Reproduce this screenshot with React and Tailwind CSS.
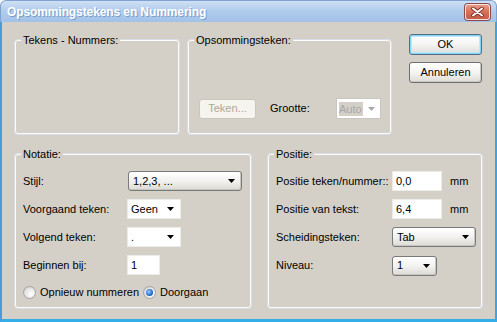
import React from "react";

function Arrow({ disabled }) {
  return (
    <svg width="7" height="4" viewBox="0 0 7 4" className="shrink-0">
      <path d="M0 0h7L3.5 4z" fill={disabled ? "#a9a9a9" : "#000"} />
    </svg>
  );
}

function DropList({ w, text }) {
  return (
    <div
      className={`${w} h-[20px] flex items-center justify-between pl-[4px] pr-[6px] rounded-[3px] border border-[#7a7a7a] bg-gradient-to-b from-[#ffffff] via-[#f2f2f0] to-[#dcdad4] shadow-[inset_-1px_-1px_0_#c8c6c0]`}
    >
      <span className="leading-none">{text}</span>
      <Arrow />
    </div>
  );
}

function EditCombo({ w, text }) {
  return (
    <div className={`${w} h-[20px] flex items-center justify-between pl-[3px] pr-[6px] bg-white border border-[#ecebe6]`}>
      <span className="leading-none">{text}</span>
      <Arrow />
    </div>
  );
}

function Input({ w, text }) {
  return (
    <div className={`${w} h-[20px] flex items-center pl-[3px] bg-white border border-[#ecebe6]`}>
      <span className="leading-none">{text}</span>
    </div>
  );
}

function Radio({ checked, label }) {
  return (
    <div className="flex items-center">
      <span className="w-[13px] h-[13px] rounded-full border border-[#a4a4a4] bg-[radial-gradient(circle_at_65%_65%,#ffffff_0%,#e6e6e6_55%,#c8c8c8_100%)] flex items-center justify-center shrink-0">
        {checked && (
          <span className="w-[7px] h-[7px] rounded-full bg-[radial-gradient(circle_at_40%_40%,#9fd0ff_0%,#2b6fd0_55%,#123f88_100%)]" />
        )}
      </span>
      <span className="ml-[4px]">{label}</span>
    </div>
  );
}

function Group({ title, className, children }) {
  return (
    <div className={`relative rounded-[3px] border border-[#fbfcfe] shadow-[0_0_0_1px_#d9dde5] ${className}`}>
      <span className="absolute -top-[7px] left-[5px] px-[2px] bg-[#d4d0c8] leading-[13px]">{title}</span>
      {children}
    </div>
  );
}

function Button({ children, focused }) {
  return (
    <div
      className={`w-[73px] h-[21px] rounded-[3px] border ${
        focused ? "border-[#5b6d80]" : "border-[#6f6f6f]"
      } bg-gradient-to-b from-[#ffffff] via-[#f4f4f2] to-[#dedcd6] flex items-center justify-center ${
        focused ? "shadow-[inset_0_0_0_1px_#7fd4f8,inset_0_0_0_2px_#bfe9fb]" : "shadow-[inset_-1px_-1px_0_#c9c7c1]"
      }`}
    >
      {children}
    </div>
  );
}

function CloseBtn() {
  return (
    <div className="w-[25px] h-[16px] rounded-[3px] border border-[#f4e4e0] bg-gradient-to-b from-[#e79a85] via-[#d5705a] to-[#c85a44] shadow-[0_0_0_1px_#8a4a4a] flex items-center justify-center">
      <svg width="13" height="10" viewBox="0 0 13 10">
        <path d="M2 1.5L11 8.5M11 1.5L2 8.5" stroke="#7a2a20" strokeWidth="3.6" strokeLinecap="round" />
        <path d="M2 1.5L11 8.5M11 1.5L2 8.5" stroke="#ffffff" strokeWidth="2" strokeLinecap="round" />
      </svg>
    </div>
  );
}

export default function App() {
  return (
    <div className="w-[497px] h-[322px] flex flex-col font-['Liberation_Sans',Arial,sans-serif] text-[11px] text-black select-none">
      <div className="h-[22px] shrink-0 flex items-center justify-between pl-[6px] pr-[6px] rounded-t-[6px] border border-b-0 border-[#7fa3d0] bg-gradient-to-b from-[#cfe0f4] via-[#afcbec] to-[#a3c2e8]">
        <span className="text-white font-bold text-[12px] tracking-[-0.1px] [text-shadow:1px_1px_0_#7a9cc8]">
          Opsommingstekens en Nummering
        </span>
        <CloseBtn />
      </div>
      <div className="flex-1 bg-[#d4d0c8] border-l-2 border-r-2 border-b-[3px] border-l-[#4a9ade] border-r-[#3aa5e6] border-b-[#33aee8] pl-[13px] pt-[12px] flex flex-col">
        <div className="flex items-start">
          <Group title="Tekens - Nummers:" className="mt-[6px] w-[164px] h-[94px]" />
          <Group title="Opsommingsteken:" className="mt-[6px] ml-[9px] w-[203px] h-[94px]">
            <div className="pt-[57px] pl-[10px] flex items-center">
              <div className="w-[57px] h-[20px] rounded-[3px] border border-[#c9c7bb] bg-[#f5f4ef] text-[#aca899] flex items-center justify-center">
                Teken...
              </div>
              <span className="ml-[14px] w-[66px]">Grootte:</span>
              <div className="w-[45px] h-[21px] flex items-center justify-between pl-[2px] pr-[5px] bg-white border border-[#c9c7c2]">
                <span className="bg-[#d4d0c8] text-[#a7a7a7] leading-[14px] pr-[1px]">Auto</span>
                <Arrow disabled />
              </div>
            </div>
          </Group>
          <div className="ml-[18px] flex flex-col gap-[7px]">
            <Button focused>OK</Button>
            <Button>Annuleren</Button>
          </div>
        </div>

        <div className="flex items-start mt-[20px]">
          <Group title="Notatie:" className="w-[236px] h-[154px]">
            <div className="pt-[16px] pl-[7px] flex flex-col gap-[8px]">
              <div className="flex items-center h-[20px]">
                <span className="w-[105px]">Stijl:</span>
                <DropList w="w-[114px]" text="1,2,3, ..." />
              </div>
              <div className="flex items-center h-[20px]">
                <span className="w-[104px]">Voorgaand teken:</span>
                <EditCombo w="w-[54px]" text="Geen" />
              </div>
              <div className="flex items-center h-[20px]">
                <span className="w-[104px]">Volgend teken:</span>
                <EditCombo w="w-[54px]" text="." />
              </div>
              <div className="flex items-center h-[20px]">
                <span className="w-[104px]">Beginnen bij:</span>
                <Input w="w-[33px]" text="1" />
              </div>
              <div className="flex items-center mt-[3px] h-[13px]">
                <div className="w-[120px]">
                  <Radio label="Opnieuw nummeren" />
                </div>
                <Radio checked label="Doorgaan" />
              </div>
            </div>
          </Group>
          <Group title="Positie:" className="ml-[17px] w-[214px] h-[154px]">
            <div className="pt-[16px] pl-[7px] flex flex-col gap-[8px]">
              <div className="flex items-center h-[20px]">
                <span className="w-[116px]">Positie teken/nummer::</span>
                <Input w="w-[50px]" text="0,0" />
                <span className="ml-[8px]">mm</span>
              </div>
              <div className="flex items-center h-[20px]">
                <span className="w-[116px]">Positie van tekst:</span>
                <Input w="w-[50px]" text="6,4" />
                <span className="ml-[8px]">mm</span>
              </div>
              <div className="flex items-center h-[20px]">
                <span className="w-[116px]">Scheidingsteken:</span>
                <DropList w="w-[84px]" text="Tab" />
              </div>
              <div className="flex items-center h-[21px]">
                <span className="w-[116px]">Niveau:</span>
                <DropList w="w-[45px]" text="1" />
              </div>
            </div>
          </Group>
        </div>
      </div>
    </div>
  );
}
